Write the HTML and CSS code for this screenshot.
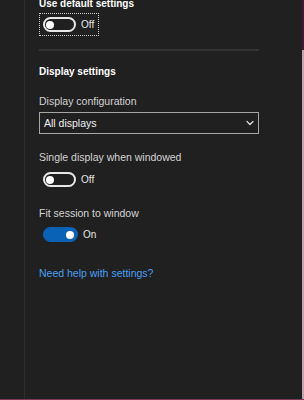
FILE: index.html
```html
<!DOCTYPE html>
<html lang="en">

<head>
    <meta charset="UTF-8">
    <meta name="viewport" content="width=device-width, initial-scale=1.0">
    <title>Display settings</title>
    <link rel="stylesheet" href="styles.css">
</head>

<body>
    <div class="app">
        <div class="rail"></div>

        <div class="panel">
            <div class="section-title first">Use default settings</div>
            <div class="toggle-row focused">
                <span class="toggle"><span class="knob"></span></span>
                <span class="toggle-label">Off</span>
            </div>

            <div class="divider"></div>

            <div class="section-title">Display settings</div>

            <div class="field-label">Display configuration</div>
            <div class="select">
                <span>All displays</span>
                <svg class="chevron" viewBox="0 0 8 8" fill="none" stroke="currentColor">
                    <path stroke-width="1.2" stroke-linecap="round" stroke-linejoin="round" d="M1 2.5L4 5.5l3-3" />
                </svg>
            </div>

            <div class="field-label spaced">Single display when windowed</div>
            <div class="toggle-row">
                <span class="toggle"><span class="knob"></span></span>
                <span class="toggle-label">Off</span>
            </div>

            <div class="field-label">Fit session to window</div>
            <div class="toggle-row tight">
                <span class="toggle on"><span class="knob"></span></span>
                <span class="toggle-label">On</span>
            </div>

            <a class="help-link" href="#">Need help with settings?</a>
        </div>

        <div class="edge"></div>
    </div>
</body>

</html>
```

FILE: styles.css
```css
body {
    margin: 0;
    background: #202020;
    font-family: "Liberation Sans", Arial, sans-serif;
    color: #e6e6e6;
    overflow: hidden;
}

.app {
    display: flex;
    height: 399px;
    border-bottom: 1px solid #7a3a55;
}

.rail {
    width: 24px;
    flex-shrink: 0;
}

.panel {
    flex: 1;
    border-left: 1px solid #2e2e2e;
    padding: 0 43px 0 14px;
}

.edge {
    width: 2px;
    flex-shrink: 0;
    background: linear-gradient(#4a1733 50px, #c3a4ad 50px);
}

.section-title {
    font-size: 10px;
    line-height: 14px;
    font-weight: 700;
    color: #ffffff;
    margin-top: 14px;
}

.section-title.first {
    margin-top: -3px;
}

.field-label {
    font-size: 10.5px;
    line-height: 14px;
    color: #d4d4d4;
    margin-top: 15px;
}

.field-label.spaced {
    margin-top: 16px;
}

.toggle-row {
    display: inline-flex;
    align-items: center;
    gap: 5px;
    padding: 3px 4px 3px 3px;
    margin-top: 4px;
    border: 1px dotted transparent;
    font-size: 10px;
    line-height: 14px;
}

.toggle-row.focused {
    margin-top: 2px;
    border-color: #cfcfcf;
}

.toggle-row.tight {
    margin-top: 3px;
}

.toggle {
    width: 27px;
    height: 11px;
    border: 2px solid #e8e8e8;
    border-radius: 8px;
    display: flex;
    align-items: center;
    padding: 0 1px;
}

.knob {
    width: 8px;
    height: 8px;
    border-radius: 50%;
    background: #ffffff;
}

.toggle.on {
    background: #0a62b6;
    border-color: #0a62b6;
    justify-content: flex-end;
    padding: 0 2px;
}

.toggle-label {
    color: #e6e6e6;
}

.divider {
    height: 2px;
    background: #333333;
    margin-top: 13px;
}

.select {
    display: flex;
    align-items: center;
    justify-content: space-between;
    height: 20px;
    margin-top: 4px;
    padding: 0 4px;
    border: 1px solid #a6a6a6;
    font-size: 10.5px;
    color: #f0f0f0;
}

.chevron {
    width: 8px;
    height: 8px;
    color: #e0e0e0;
}

.help-link {
    display: block;
    margin-top: 20px;
    font-size: 10.5px;
    line-height: 14px;
    color: #4a9ff2;
    text-decoration: none;
}
```
